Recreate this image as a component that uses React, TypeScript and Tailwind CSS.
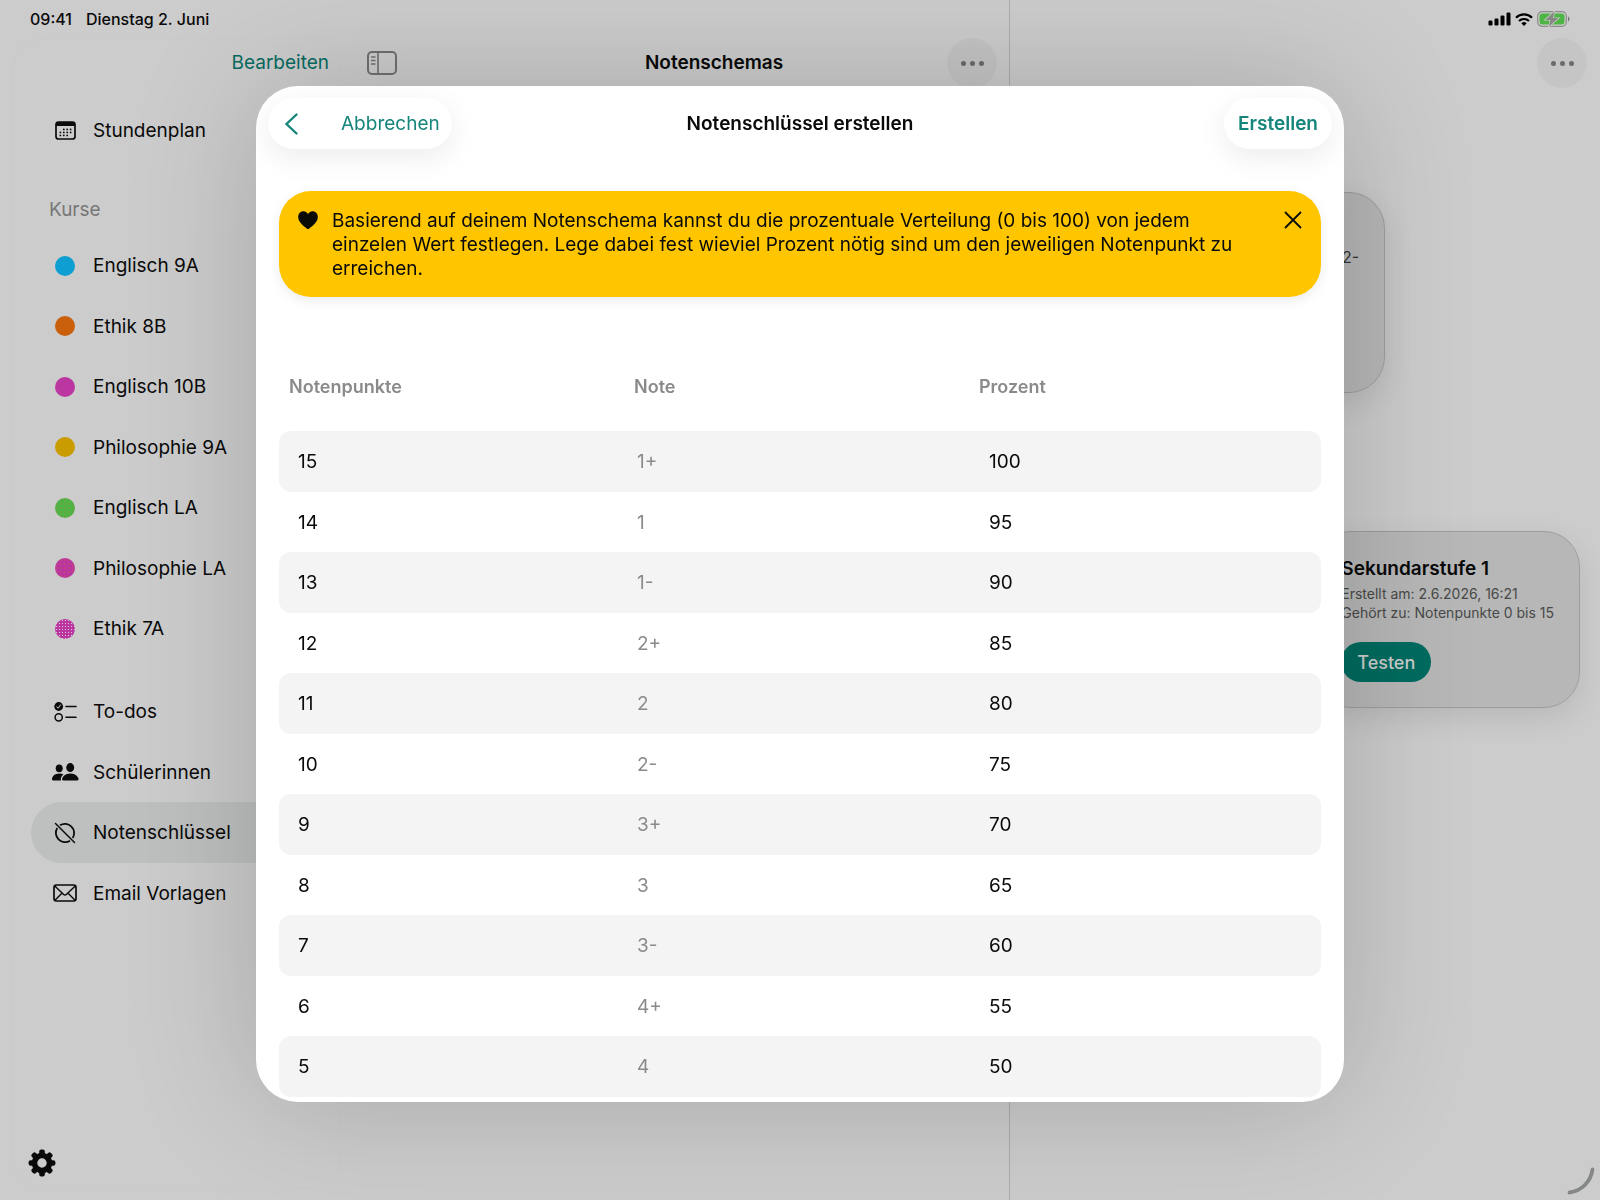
import { useState } from 'react'
import type { ReactNode } from 'react'
import clsx from 'clsx'

const courses = [
	{ name: 'Englisch 9A', dot: 'bg-[#0d9ed2]' },
	{ name: 'Ethik 8B', dot: 'bg-[#ca5f0c]' },
	{ name: 'Englisch 10B', dot: 'bg-[#bc36a1]' },
	{ name: 'Philosophie 9A', dot: 'bg-[#c99c00]' },
	{
		name: 'Englisch LA',
		dot: 'bg-[#4fb446] bg-[radial-gradient(#a08a2c_0.5px,transparent_0.8px)] bg-[size:4px_4px]',
	},
	{
		name: 'Philosophie LA',
		dot: 'bg-[#bc36a1] bg-[radial-gradient(#c8583c_0.5px,transparent_0.8px)] bg-[size:4px_4px]',
	},
	{
		name: 'Ethik 7A',
		dot: 'bg-[#bc36a1] bg-[radial-gradient(#dcc8d8_0.6px,transparent_0.9px)] bg-[size:3px_3px]',
	},
]

const grades = [
	{ points: 15, grade: '1+', percent: 100 },
	{ points: 14, grade: '1', percent: 95 },
	{ points: 13, grade: '1-', percent: 90 },
	{ points: 12, grade: '2+', percent: 85 },
	{ points: 11, grade: '2', percent: 80 },
	{ points: 10, grade: '2-', percent: 75 },
	{ points: 9, grade: '3+', percent: 70 },
	{ points: 8, grade: '3', percent: 65 },
	{ points: 7, grade: '3-', percent: 60 },
	{ points: 6, grade: '4+', percent: 55 },
	{ points: 5, grade: '4', percent: 50 },
]

function CalendarIcon() {
	const dots = [
		[8.8, 8.4], [12.2, 8.4], [15.6, 8.4],
		[5.4, 11.4], [8.8, 11.4], [12.2, 11.4], [15.6, 11.4],
		[5.4, 14.4], [8.8, 14.4], [12.2, 14.4],
	]
	return (
		<svg width="21" height="19" viewBox="0 0 21 19" fill="none">
			<rect x="1" y="1" width="19" height="17" rx="2.6" stroke="currentColor" strokeWidth="1.7" />
			<path d="M1 5V3.600A2.600 2.600 0 0 1 3.600 1h13.800A2.600 2.600 0 0 1 20 3.600V5z" fill="currentColor" />
			{dots.map(([x, y]) => (
				<circle key={`${x}-${y}`} cx={x} cy={y} r="0.9" fill="currentColor" />
			))}
		</svg>
	)
}

function ChecklistIcon() {
	return (
		<svg width="23" height="20" viewBox="0 0 23 20" fill="none">
			<circle cx="4.7" cy="4.5" r="4.4" fill="currentColor" />
			<path d="m2.9 4.8 1.3 1.4 2.3-3.3" stroke="#ccc" strokeWidth="1" strokeLinecap="round" />
			<circle cx="4.7" cy="15.3" r="3.6" stroke="currentColor" strokeWidth="1.5" />
			<path d="M12 4.5h10M12 15.3h10" stroke="currentColor" strokeWidth="1.6" strokeLinecap="round" />
		</svg>
	)
}

function PeopleIcon() {
	return (
		<svg width="27" height="18" viewBox="0 0 27 18" fill="currentColor">
			<ellipse cx="7.2" cy="5.3" rx="3.5" ry="3.9" />
			<ellipse cx="18.2" cy="4.6" rx="4" ry="4.5" />
			<path d="M1.2 17.4C.4 17.4 0 17 0 16.200c0-2.600 2.800-5.700 7.200-5.700 1.700 0 3.100.4 4.300 1.100-1.700 1.300-2.700 3-2.700 4.500 0 .5.100.9.400 1.300z" />
			<path d="M11.600 17.400c-1.100 0-1.500-.4-1.500-1.200 0-2.200 3-5.700 8.200-5.700s8.200 3.500 8.200 5.700c0 .8-.4 1.200-1.500 1.200z" />
		</svg>
	)
}

function CircleSlashIcon() {
	return (
		<svg width="22" height="22" viewBox="0 0 22 22" fill="none" stroke="currentColor" strokeWidth="1.800">
			<path d="M1.500 1.500l19 19" strokeWidth="1.500" strokeLinecap="round" />
			<path d="M6 3.300A9.200 9.200 0 0 1 18.700 16" />
			<path d="M3.300 6A9.200 9.200 0 0 0 16 18.700" />
		</svg>
	)
}

function EnvelopeIcon() {
	return (
		<svg width="24" height="18" viewBox="0 0 24 18" fill="none" stroke="currentColor" strokeWidth="1.700" strokeLinecap="round">
			<rect x="1" y="1" width="22" height="16" rx="2.400" />
			<path d="M1.800 1.900l8.600 8.300a2.300 2.300 0 0 0 3.200 0l8.600-8.300M1.900 16.200l7-7M22.100 16.200l-7-7" strokeWidth="1.400" />
		</svg>
	)
}

function SidebarIcon() {
	return (
		<svg width="30" height="24" viewBox="0 0 30 24" fill="none" stroke="currentColor">
			<rect x="1" y="1" width="28" height="22" rx="4" strokeWidth="2" />
			<path d="M11 1v22" strokeWidth="1.600" />
			<path d="M4.500 6h3.500M4.500 9.500h3.500M4.500 13h3.500" strokeWidth="1.400" strokeLinecap="round" />
		</svg>
	)
}

function GearIcon() {
	return (
		<svg width="28" height="28" viewBox="0 0 28 28" fill="none">
			<circle cx="14" cy="14" r="7.500" stroke="currentColor" strokeWidth="5.600" />
			{[0, 45, 90, 135, 180, 225, 270, 315].map((angle) => (
				<rect
					key={angle}
					x="11.200"
					y="0.600"
					width="5.600"
					height="6"
					rx="2"
					fill="currentColor"
					transform={`rotate(${angle} 14 14)`}
				/>
			))}
		</svg>
	)
}

function StatusIcons() {
	return (
		<div className="flex items-center gap-1">
			<svg width="23" height="14" viewBox="0 0 23 14" fill="#000">
				<rect x="0.500" y="8.500" width="4" height="5" rx="1.200" />
				<rect x="6.500" y="6.500" width="4" height="7" rx="1.200" />
				<rect x="12.500" y="3.500" width="4" height="10" rx="1.200" />
				<rect x="18.500" y="0.500" width="4" height="13" rx="1.200" />
			</svg>
			<svg width="18" height="13" viewBox="0 0 18 13" fill="none" stroke="#000" strokeWidth="2.200">
				<path d="M1 4.700a11.400 11.400 0 0 1 16 0" />
				<path d="M4 8a7.200 7.200 0 0 1 10 0" />
				<path d="M6.300 10.300a3.900 3.900 0 0 1 5.400 0L9 13z" fill="#000" stroke="none" />
			</svg>
			<svg width="33" height="16" viewBox="0 0 33 16">
				<rect x="0.700" y="0.700" width="28.600" height="14.600" rx="4.500" fill="none" stroke="#8b8d8b" strokeWidth="1.200" />
				<rect x="2.500" y="2.500" width="25" height="11" rx="3" fill="#4fb446" />
				<path d="M31 5.500c1 .4 1.500 1.300 1.500 2.500S32 10.100 31 10.500z" fill="#777" />
				<path
					d="M17.500.2 8.300 8.900h5.200L11.700 15.800l9.800-8.700h-5.600z"
					fill="#858785"
					stroke="#ccc"
					strokeWidth="1.400"
					paintOrder="stroke"
				/>
			</svg>
		</div>
	)
}

function MoreButton() {
	return (
		<button
			type="button"
			aria-label="Mehr"
			className="flex size-[50px] shrink-0 items-center justify-center gap-1 rounded-full bg-black/3 text-[#6b6b6b]"
		>
			<span className="size-[5px] rounded-full bg-current" />
			<span className="size-[5px] rounded-full bg-current" />
			<span className="size-[5px] rounded-full bg-current" />
		</button>
	)
}

interface NavItemProps {
	icon: ReactNode
	active?: boolean
	children: ReactNode
}

function NavItem({ icon, active, children }: NavItemProps) {
	return (
		<li className="h-[60px] odd:h-[61px]">
			<a
				href="#"
				className={clsx(
					'flex h-full items-center gap-[14px] rounded-full pl-5',
					active && 'bg-[#00140a]/7'
				)}
			>
				<span className="flex w-7 justify-center">{icon}</span>
				<span className="pt-0.5">{children}</span>
			</a>
		</li>
	)
}

function Sidebar() {
	return (
		<aside className="ml-3 mb-[11px] flex w-[329px] shrink-0 flex-col rounded-[32px] border border-[#cacaca]">
			<div className="flex h-[49px] shrink-0 items-center justify-end pr-[11px]">
				<button type="button" className="text-[#066b61]">
					Bearbeiten
				</button>
			</div>

			<nav className="px-[18px] pt-3">
				<ul>
					<NavItem icon={<CalendarIcon />}>Stundenplan</NavItem>
				</ul>
				<h2 className="mt-[35px] mb-[11px] pl-[18px] leading-7 text-[#777]">Kurse</h2>
				<ul>
					{courses.map((course) => (
						<NavItem
							key={course.name}
							icon={<span className={clsx('size-5 rounded-full', course.dot)} />}
						>
							{course.name}
						</NavItem>
					))}
				</ul>
				<ul className="mt-[22px]">
					<NavItem icon={<ChecklistIcon />}>To-dos</NavItem>
					<NavItem icon={<PeopleIcon />}>Schülerinnen</NavItem>
					<NavItem icon={<CircleSlashIcon />} active>
						Notenschlüssel
					</NavItem>
					<NavItem icon={<EnvelopeIcon />}>Email Vorlagen</NavItem>
				</ul>
			</nav>

			<button
				type="button"
				aria-label="Einstellungen"
				className="mt-auto flex h-[50px] w-[58px] items-center justify-center"
			>
				<GearIcon />
			</button>
		</aside>
	)
}

function DetailPane() {
	return (
		<section className="flex flex-col">
			<div className="flex h-[38px] items-center justify-end pr-[30px]">
				<StatusIcons />
			</div>
			<div className="flex h-[50px] justify-end pr-[13px]">
				<MoreButton />
			</div>

			<div className="flex flex-col px-5 pt-[104px]">
				<article className="flex h-[201px] w-[355px] justify-end rounded-[36px] border border-[#9c9e9c] bg-black/10 px-[25px] pt-[52px] text-base leading-6 text-[#333] shadow-[0_10px_30px_rgba(0,0,0,0.1)]">
					2-
				</article>

				<article className="mt-[138px] ml-auto h-[177px] rounded-[36px] border border-[#9c9e9c] bg-black/10 px-[25px] pt-[25px] shadow-[0_10px_30px_rgba(0,0,0,0.1)]">
					<h3 className="leading-6 font-semibold">Sekundarstufe 1</h3>
					<p className="mt-[3px] text-sm leading-[19px] text-[#484a48]">
						Erstellt am: 2.6.2026, 16:21
						<br />
						Gehört zu: Notenpunkte 0 bis 15
					</p>
					<button
						type="button"
						className="mt-5 h-10 rounded-full bg-[#006b5f] px-4 pt-px text-lg font-medium text-[#ccc]"
					>
						Testen
					</button>
				</article>
			</div>
		</section>
	)
}

function Notice({ onClose }: { onClose: () => void }) {
	return (
		<div className="flex items-start rounded-[32px] bg-[#ffc600] px-[19px] pt-[17px] pb-4 shadow-[0_4px_12px_rgba(0,0,0,0.08)]">
			<svg width="20" height="24" viewBox="0 0 20 24" className="shrink-0" fill="#0a0a06">
				<path d="M10 21c-.4 0-.8-.3-1.200-.6C3.600 16.500.2 13 .2 8.900.2 5.500 2.500 3.200 5.400 3.200c2 0 3.600 1.100 4.600 2.800 1-1.700 2.600-2.800 4.600-2.800 2.900 0 5.200 2.300 5.200 5.700 0 4.100-3.400 7.600-8.600 11.500-.4.300-.8.600-1.200.6z" />
			</svg>
			<p className="mr-10 ml-[14px] flex-1 pt-px leading-6">
				Basierend auf deinem Notenschema kannst du die prozentuale Verteilung (0 bis
				100) von jedem einzelen Wert festlegen. Lege dabei fest wieviel Prozent nötig
				sind um den jeweiligen Notenpunkt zu erreichen.
			</p>
			<button type="button" aria-label="Schließen" onClick={onClose} className="h-6">
				<svg width="18" height="18" viewBox="0 0 18 18" stroke="#0a0a06" strokeWidth="1.800" strokeLinecap="round">
					<path d="M1.500 1.500l15 15M16.500 1.500l-15 15" />
				</svg>
			</button>
		</div>
	)
}

function GradeTable() {
	return (
		<table className="mt-11 w-full table-fixed text-left">
			<thead className="text-lg text-[#8a8a8a]">
				<tr className="h-[90px]">
					<th className="w-[348px] pt-0.5 pl-[10px] font-semibold">Notenpunkte</th>
					<th className="w-[344px] pt-0.5 pl-[7px] font-semibold">Note</th>
					<th className="pt-0.5 pl-[8px] font-semibold">Prozent</th>
				</tr>
			</thead>
			<tbody>
				{grades.map(({ points, grade, percent }) => (
					<tr key={points} className="h-[60px] odd:h-[61px] odd:bg-[#f4f4f4]">
						<td className="rounded-l-xl pt-0.5 pl-[19px]">{points}</td>
						<td className="pt-0.5 pl-[10px] text-[#8a8a8a]">{grade}</td>
						<td className="rounded-r-xl pt-0.5 pl-[18px]">
							<input
								aria-label={`Prozent für ${points} Notenpunkte`}
								inputMode="numeric"
								defaultValue={percent}
								className="block w-40 bg-transparent outline-none"
							/>
						</td>
					</tr>
				))}
			</tbody>
		</table>
	)
}

function CreateDialog() {
	const [showNotice, setShowNotice] = useState(true)

	return (
		<div className="fixed inset-0 px-64 pt-[86px] pb-[98px]">
			<div
				role="dialog"
				aria-labelledby="dialog-title"
				className="flex h-full flex-col overflow-hidden rounded-[42px] bg-white shadow-[0_0_130px_rgba(0,12,0,0.19)]"
			>
				<header className="grid shrink-0 grid-cols-[1fr_auto_1fr] items-center p-3">
					<button
						type="button"
						className="flex h-[51px] items-center gap-[43px] justify-self-start rounded-full bg-white pr-3 pl-4 text-[#16857b] shadow-[0_8px_30px_rgba(0,0,0,0.08)]"
					>
						<svg width="14" height="22" viewBox="0 0 14 22" fill="none" stroke="currentColor" strokeWidth="2.400" strokeLinecap="round">
							<path d="M12.500 1.500L2.500 11l10 9.500" />
						</svg>
						<span className="pt-0.5">Abbrechen</span>
					</button>
					<h1 id="dialog-title" className="pt-0.5 font-semibold">
						Notenschlüssel erstellen
					</h1>
					<button
						type="button"
						className="h-[51px] justify-self-end rounded-full bg-white px-[14px] pt-0.5 font-semibold text-[#16857b] shadow-[0_8px_30px_rgba(0,0,0,0.08)]"
					>
						Erstellen
					</button>
				</header>

				<div className="px-[23px] pt-[30px]">
					{showNotice && <Notice onClose={() => setShowNotice(false)} />}
					<GradeTable />
				</div>
			</div>
		</div>
	)
}

export default function App() {
	return (
		<div className="grid min-h-screen grid-cols-[minmax(0,1010fr)_minmax(0,590fr)] overflow-hidden bg-[#ccc] font-['Inter',sans-serif] text-[19px] text-[#0a0a0a]">
			<div className="flex flex-col border-r border-[#acacac]">
				<div className="flex h-[38px] shrink-0 items-center gap-[14px] pl-[30px] text-base font-medium">
					<span>09:41</span>
					<span>Dienstag 2. Juni</span>
				</div>
				<div className="flex flex-1">
					<Sidebar />
					<main className="flex-1">
						<header className="flex h-[50px] items-center pr-3 pl-[26px]">
							<button type="button" aria-label="Seitenleiste" className="text-[#6f716f]">
								<SidebarIcon />
							</button>
							<h1 className="flex-1 pt-px pl-[84px] text-center font-semibold">
								Notenschemas
							</h1>
							<MoreButton />
						</header>
					</main>
				</div>
			</div>

			<DetailPane />
			<CreateDialog />

			<svg
				className="pointer-events-none fixed right-1 bottom-1"
				width="30"
				height="30"
				viewBox="0 0 30 30"
				fill="none"
				stroke="#858887"
				strokeWidth="3.800"
				strokeLinecap="round"
			>
				<path d="M26.500 3.500C25 15 16 25 3.500 26.500" />
			</svg>
		</div>
	)
}
